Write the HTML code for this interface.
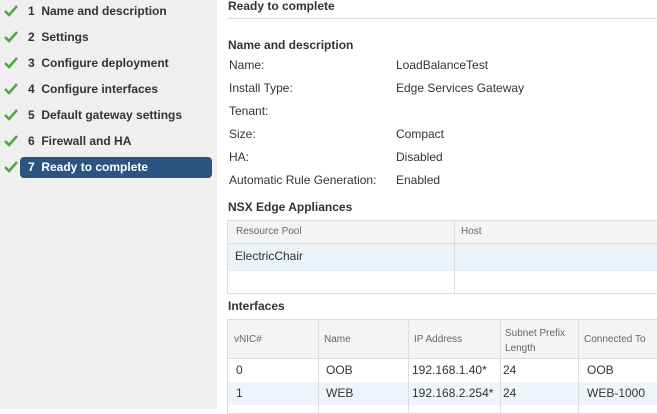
<!DOCTYPE html><html><head><style>
body{margin:0;width:657px;height:409px;overflow:hidden;font-family:"Liberation Sans",Arial,sans-serif;background:#fff;position:relative}
.side{position:absolute;left:0;top:0;width:217px;height:409px;background:#efefef}
.step{position:absolute;left:0;height:20px;font-size:12px;font-weight:bold;color:#333;width:212px}
.step svg{position:absolute;left:4px;top:4px}
.step span{position:absolute;left:28px;top:3px}
.step.sel .bg{position:absolute;left:20px;top:0;width:192px;height:21px;background:#2b5580;border-radius:4px}
.step.sel span{color:#fff}
.t{position:absolute;font-size:12px;color:#333;white-space:nowrap}
.b{font-weight:bold}
.g{position:absolute;font-size:10px;color:#666}
.ln{position:absolute;background:#ddd}
</style></head><body>
<div class="side">
<div class="step" style="top:1px"><svg width="14" height="12"><path d="M1 6l4 4 8-9" stroke="#4aaa3a" stroke-width="2.5" fill="none"/></svg><span>1 &nbsp;Name and description</span></div>
<div class="step" style="top:27px"><svg width="14" height="12"><path d="M1 6l4 4 8-9" stroke="#4aaa3a" stroke-width="2.5" fill="none"/></svg><span>2 &nbsp;Settings</span></div>
<div class="step" style="top:53px"><svg width="14" height="12"><path d="M1 6l4 4 8-9" stroke="#4aaa3a" stroke-width="2.5" fill="none"/></svg><span>3 &nbsp;Configure deployment</span></div>
<div class="step" style="top:79px"><svg width="14" height="12"><path d="M1 6l4 4 8-9" stroke="#4aaa3a" stroke-width="2.5" fill="none"/></svg><span>4 &nbsp;Configure interfaces</span></div>
<div class="step" style="top:105px"><svg width="14" height="12"><path d="M1 6l4 4 8-9" stroke="#4aaa3a" stroke-width="2.5" fill="none"/></svg><span>5 &nbsp;Default gateway settings</span></div>
<div class="step" style="top:131px"><svg width="14" height="12"><path d="M1 6l4 4 8-9" stroke="#4aaa3a" stroke-width="2.5" fill="none"/></svg><span>6 &nbsp;Firewall and HA</span></div>
<div class="step sel" style="top:157px"><div class="bg"></div><svg width="14" height="12"><path d="M1 6l4 4 8-9" stroke="#4aaa3a" stroke-width="2.5" fill="none"/></svg><span>7 &nbsp;Ready to complete</span></div>
</div>
<div class="t b" style="left:228px;top:-1px">Ready to complete</div>
<div class="ln" style="left:227px;top:18px;width:430px;height:1px"></div>
<div class="t b" style="left:228px;top:38px">Name and description</div>
<div class="t" style="left:229px;top:58px">Name:</div><div class="t" style="left:396px;top:58px">LoadBalanceTest</div>
<div class="t" style="left:229px;top:81px">Install Type:</div><div class="t" style="left:396px;top:81px">Edge Services Gateway</div>
<div class="t" style="left:229px;top:104px">Tenant:</div>
<div class="t" style="left:229px;top:127px">Size:</div><div class="t" style="left:396px;top:127px">Compact</div>
<div class="t" style="left:229px;top:150px">HA:</div><div class="t" style="left:396px;top:150px">Disabled</div>
<div class="t" style="left:229px;top:173px">Automatic Rule Generation:</div><div class="t" style="left:396px;top:173px">Enabled</div>
<div class="t b" style="left:228px;top:200px">NSX Edge Appliances</div>
<div style="position:absolute;left:227px;top:220px;width:440px;height:74px;border:1px solid #ddd;box-sizing:border-box">
<div style="position:absolute;left:0;top:0;width:100%;height:22px;background:#f4f4f4;border-bottom:1px solid #ddd"></div>
<div style="position:absolute;left:0;top:23px;width:100%;height:26px;background:#eaf2fa;border-bottom:1px solid #eee"></div>
<div style="position:absolute;left:226px;top:0;width:1px;height:100%;background:#ddd"></div>
</div>
<div class="g" style="left:236px;top:226px">Resource Pool</div><div class="g" style="left:461px;top:226px">Host</div>
<div class="t" style="left:235px;top:249px">ElectricChair</div>
<div class="t b" style="left:228px;top:299px">Interfaces</div>
<div style="position:absolute;left:227px;top:319px;width:440px;height:95px;border:1px solid #ddd;box-sizing:border-box">
<div style="position:absolute;left:0;top:0;width:100%;height:38px;background:#f4f4f4;border-bottom:1px solid #ddd"></div>
<div style="position:absolute;left:0;top:62px;width:100%;height:23px;background:#eef4fa"></div>
<div style="position:absolute;left:90px;top:0;width:1px;height:100%;background:#ddd"></div>
<div style="position:absolute;left:180px;top:0;width:1px;height:100%;background:#ddd"></div>
<div style="position:absolute;left:272px;top:0;width:1px;height:100%;background:#ddd"></div>
<div style="position:absolute;left:350px;top:0;width:1px;height:100%;background:#ddd"></div>
</div>
<div class="g" style="left:234px;top:334px">vNIC#</div><div class="g" style="left:324px;top:334px">Name</div>
<div class="g" style="left:414px;top:334px">IP Address</div><div class="g" style="left:505px;top:326px;line-height:15px">Subnet Prefix<br>Length</div>
<div class="g" style="left:584px;top:334px">Connected To</div>
<div class="t" style="left:236px;top:363px">0</div><div class="t" style="left:326px;top:363px">OOB</div><div class="t" style="left:412px;top:363px">192.168.1.40*</div><div class="t" style="left:503px;top:363px">24</div><div class="t" style="left:587px;top:363px">OOB</div>
<div class="t" style="left:236px;top:386px">1</div><div class="t" style="left:326px;top:386px">WEB</div><div class="t" style="left:412px;top:386px">192.168.2.254*</div><div class="t" style="left:503px;top:386px">24</div><div class="t" style="left:587px;top:386px">WEB-1000</div>
</body></html>
